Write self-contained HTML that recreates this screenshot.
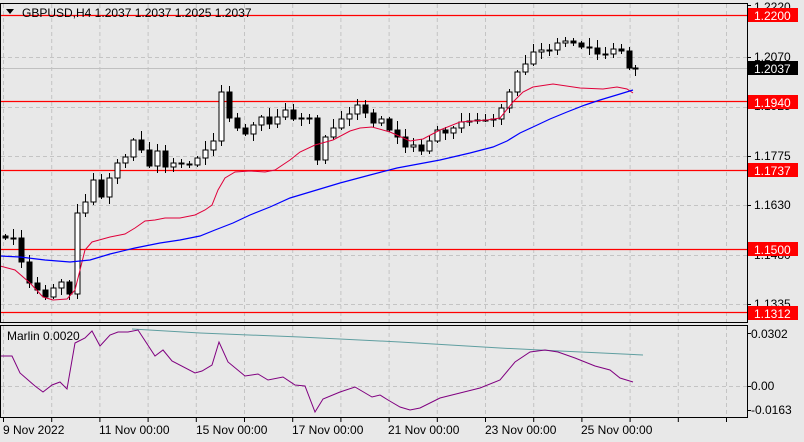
<!DOCTYPE html>
<html><head><meta charset="utf-8"><style>
body{margin:0;width:804px;height:442px;overflow:hidden;background:#e8e8e8;font-family:"Liberation Sans",sans-serif;}
svg{position:absolute;left:0;top:0}
text{font-family:"Liberation Sans",sans-serif;font-size:12px;fill:#000}
</style></head><body>
<svg id="s" width="804" height="442" xmlns="http://www.w3.org/2000/svg">
<rect width="804" height="442" fill="#e8e8e8"/>
<g stroke="#c4c4c4" stroke-dasharray="4,3" stroke-width="1" id="grid"></g>
<g stroke="#ff0000" stroke-width="1.2">
<line x1="0" y1="15.5" x2="747" y2="15.5"/>
<line x1="0" y1="101.5" x2="747" y2="101.5"/>
<line x1="0" y1="170.5" x2="747" y2="170.5"/>
<line x1="0" y1="249.5" x2="747" y2="249.5"/>
<line x1="0" y1="312.5" x2="747" y2="312.5"/>
</g>
<line x1="0" y1="68.5" x2="747" y2="68.5" stroke="#c0c0c0"/>
<g id="candles"></g>
<polyline fill="none" stroke="#e0003a" stroke-width="1" points="0,266 15,270 30,283 43,297 53,300 67,299 75,290 85,250 92,242 110,237 125,234 135,228 145,221 155,220 165,218 180,218 195,215 205,210 212,205 218,190 225,178 235,172 250,171 265,172 275,170 290,160 300,152 315,145 333,140 350,131 360,128 372,127 390,132 410,141 423,139 440,130 460,122 487,120 500,118 513,102 523,92 533,87 553,84 580,88 603,89 617,87 627,89 633,93"/>
<polyline fill="none" stroke="#0000ff" stroke-width="1.2" points="0,256 20,257 45,260 70,262 90,260 110,254 135,248 160,243 180,240 200,236 215,230 233,223 250,215 270,207 290,198 310,192 340,183 370,175 397,168 440,160 470,153 493,147 507,141 520,133 533,127 550,119 567,112 585,105 600,100 620,94 633,90"/>
<polyline fill="none" stroke="#5f9ea0" stroke-width="1" points="132,329 200,333 300,337 400,342 500,348 560,351 643,355"/>
<polyline fill="none" stroke="#800080" stroke-width="1" points="0,356 12,356 20,373 35,386 43,392 52,385 60,382 67,389 75,343 85,338 92,331 100,346 110,335 118,332 128,332 138,330 155,356 163,350 172,361 195,373 202,371 212,365 219,342 228,362 245,376 258,374 268,380 283,377 295,385 305,386 315,412 323,399 340,392 355,387 372,397 380,395 388,400 400,407 410,410 420,408 440,398 460,393 480,388 500,380 515,362 530,352 545,350 558,352 575,358 595,366 610,370 620,378 633,382"/>
<rect x="0.5" y="3.5" width="747" height="319" fill="none" stroke="#000"/>
<rect x="0.5" y="325.5" width="747" height="92" fill="none" stroke="#000"/>
<path d="M6,9 L14,9 L10,14 Z" fill="#000"/>
<text x="22" y="17">GBPUSD,H4  1.2037 1.2037 1.2025 1.2037</text>
<text x="7" y="340">Marlin 0.0020</text>
<g id="ticks" stroke="#000"></g>
<text x="754" y="11">1.2220</text>
<text x="754" y="61">1.2070</text>
<text x="754" y="110">1.1925</text>
<text x="754" y="160">1.1775</text>
<text x="754" y="209">1.1630</text>
<text x="754" y="259">1.1480</text>
<text x="754" y="308">1.1335</text>
<rect x="748" y="8" width="50" height="14" fill="#ff0000"/><text x="754" y="20" style="fill:#fff">1.2200</text>
<rect x="748" y="61" width="50" height="14" fill="#000"/><text x="754" y="73" style="fill:#fff">1.2037</text>
<rect x="748" y="95" width="50" height="14" fill="#ff0000"/><text x="754" y="107" style="fill:#fff">1.1940</text>
<rect x="748" y="163" width="50" height="14" fill="#ff0000"/><text x="754" y="175" style="fill:#fff">1.1737</text>
<rect x="748" y="242" width="50" height="14" fill="#ff0000"/><text x="754" y="254" style="fill:#fff">1.1500</text>
<rect x="748" y="306" width="50" height="14" fill="#ff0000"/><text x="754" y="318" style="fill:#fff">1.1312</text>
<text x="751" y="338">0.0302</text>
<text x="751" y="390">0.00</text>
<text x="751" y="414">-0.0163</text>
<text x="3" y="434">9 Nov 2022</text>
<text x="99" y="434">11 Nov 00:00</text>
<text x="196" y="434">15 Nov 00:00</text>
<text x="292" y="434">17 Nov 00:00</text>
<text x="388" y="434">21 Nov 00:00</text>
<text x="485" y="434">23 Nov 00:00</text>
<text x="581" y="434">25 Nov 00:00</text>
</svg>
<script>
(function(){
var NS="http://www.w3.org/2000/svg";
function el(p,t,a){var e=document.createElementNS(NS,t);for(var k in a)e.setAttribute(k,a[k]);p.appendChild(e);return e;}
var g=document.getElementById('grid');
for(var x=3.5;x<747;x+=48.2){el(g,'line',{x1:x,y1:4,x2:x,y2:322});el(g,'line',{x1:x,y1:326,x2:x,y2:417});}
[57.5,107.5,156.5,205.5,255.5,304.5].forEach(function(y){el(g,'line',{x1:1,y1:y,x2:747,y2:y});});
el(g,'line',{x1:1,y1:386.5,x2:747,y2:386.5});
var tk=document.getElementById('ticks');
[5,57,107,156,205,255,304,333,386,410].forEach(function(y){el(tk,'line',{x1:747,y1:y+.5,x2:751,y2:y+.5});});
for(var x2=3.5;x2<747;x2+=48.2){el(tk,'line',{x1:x2,y1:418,x2:x2,y2:422});}
var c=[238,238,262,283,290,297,288,282,294,213,202,180,197,178,163,157,140,150,166,151,167,163,164,165,158,150,141,92,118,128,134,125,117,124,117,110,119,
118,118,160,137,128,119,114,105,113,123,119,130,137,147,145,151,141,130,133,128,122,121,120,120,119,108,92,72,64,52,50,50,43,41,43,47,48,54,54,49,51,68,69];
var cg=document.getElementById('candles');var prev=236;
for(var i=0;i<c.length;i++){var cx=5+i*8;if(cx>635)cx=635;var o=prev,cl=c[i];
var tp=Math.min(o,cl),bt=Math.max(o,cl);var hi=tp-2-((i*7)%8),lo=bt+2+((i*5)%6);
el(cg,'line',{x1:cx+.5,y1:hi,x2:cx+.5,y2:lo,stroke:'#000'});
var h=Math.max(bt-tp,1);
el(cg,'rect',{x:cx-2,y:tp,width:5,height:h,fill:(cl<o?'#fff':'#000'),stroke:'#000'});
prev=cl;}
})();
</script>
</body></html>
